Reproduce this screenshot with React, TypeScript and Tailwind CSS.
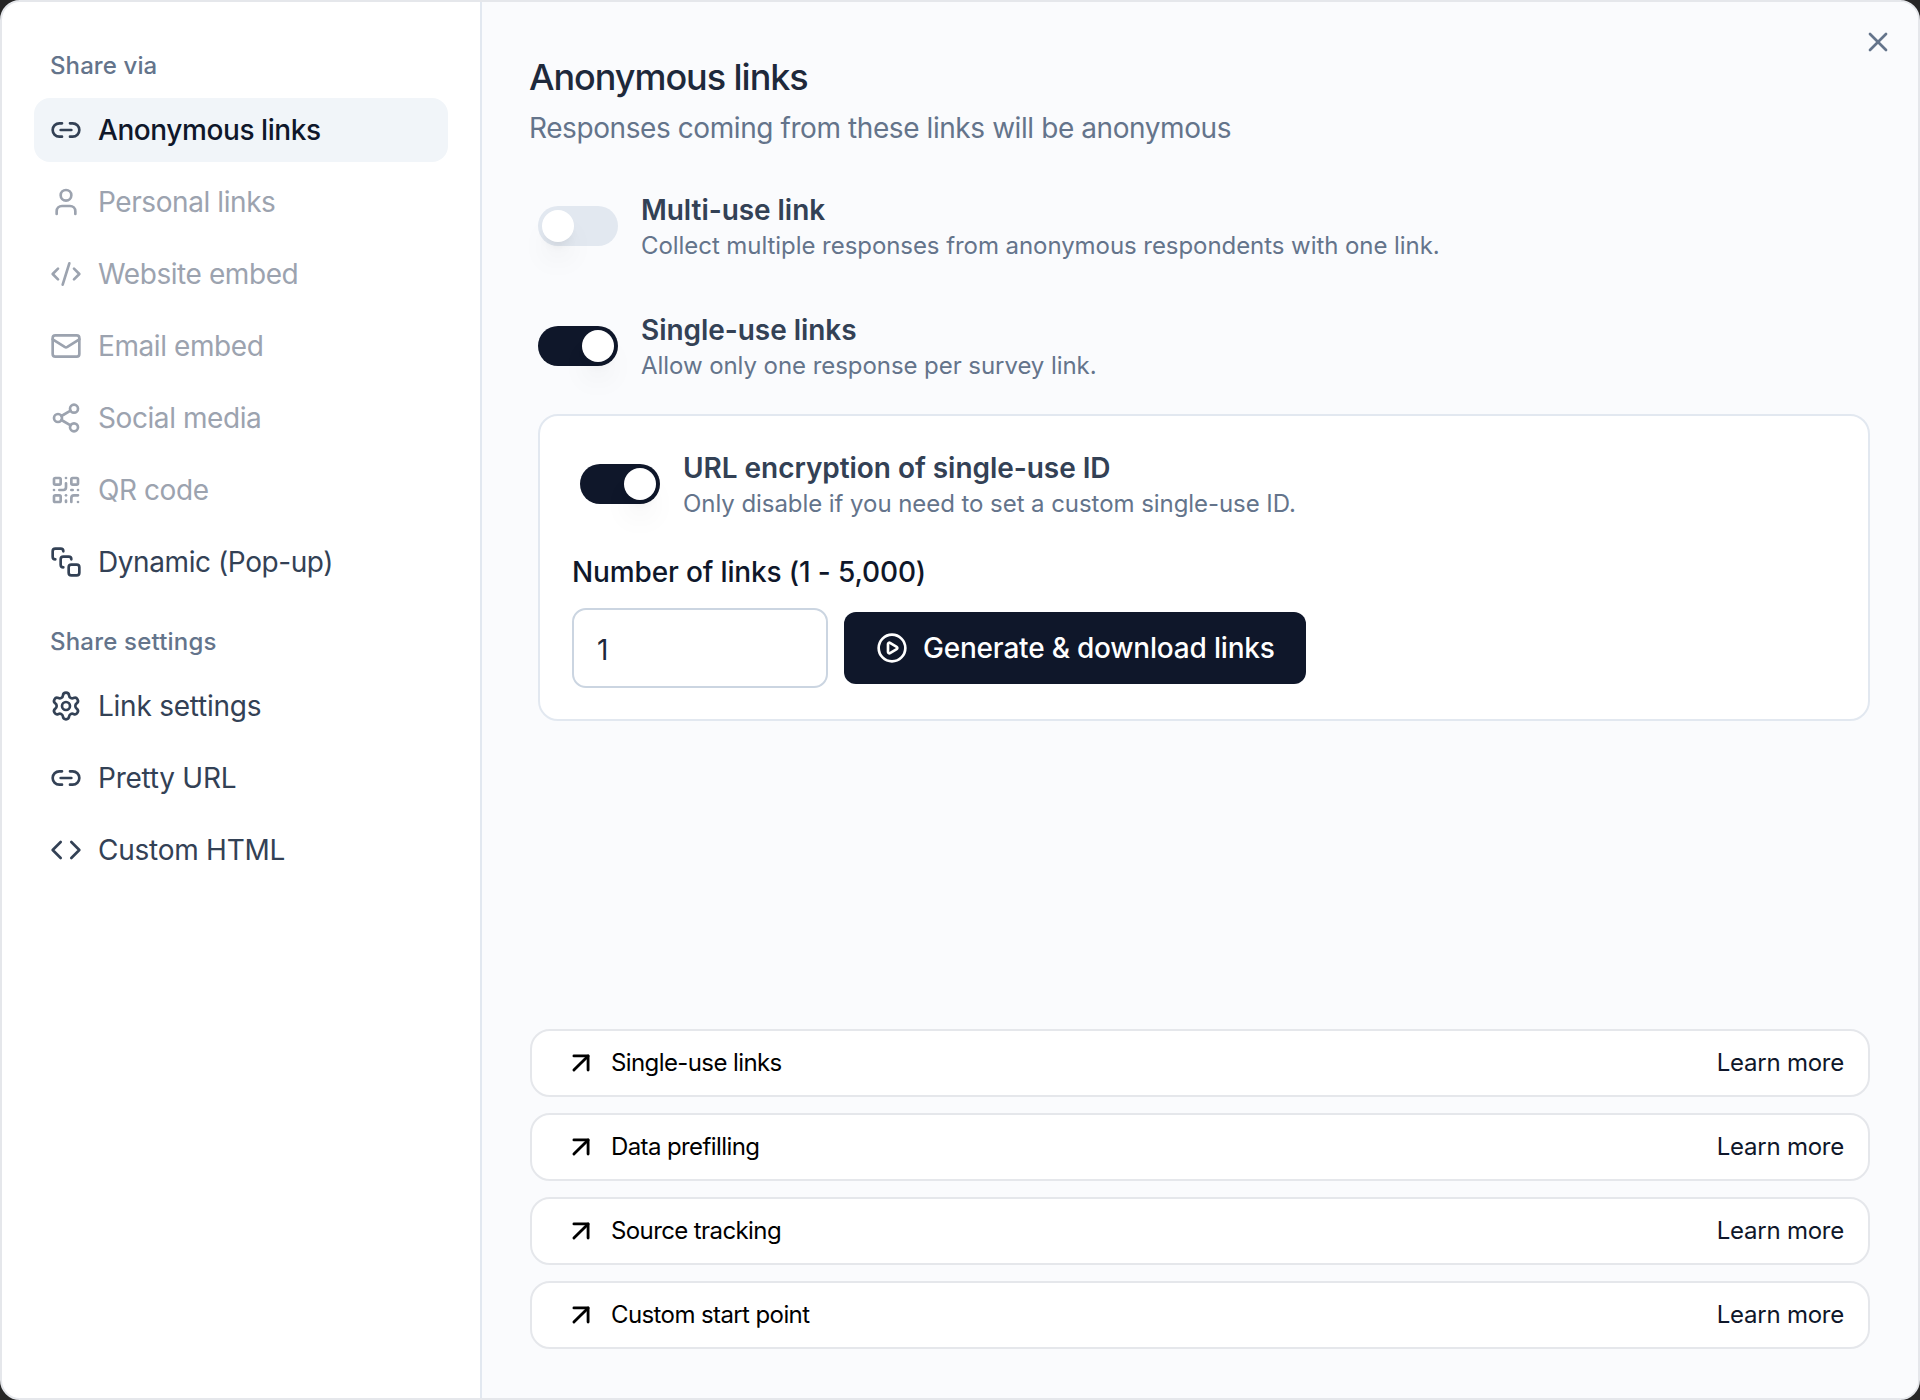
import {
  ArrowUpRight,
  CirclePlay,
  CodeXml,
  Code,
  Link2,
  Mail,
  QrCode,
  Settings,
  Share2,
  SquareStack,
  User,
  X,
} from "lucide-react"
import type { LucideIcon } from "lucide-react"

const shareItems: { label: string; icon: LucideIcon; state: "active" | "muted" | "normal" }[] = [
  { label: "Anonymous links", icon: Link2, state: "active" },
  { label: "Personal links", icon: User, state: "muted" },
  { label: "Website embed", icon: CodeXml, state: "muted" },
  { label: "Email embed", icon: Mail, state: "muted" },
  { label: "Social media", icon: Share2, state: "muted" },
  { label: "QR code", icon: QrCode, state: "muted" },
  { label: "Dynamic (Pop-up)", icon: SquareStack, state: "normal" },
]

const settingItems: { label: string; icon: LucideIcon }[] = [
  { label: "Link settings", icon: Settings },
  { label: "Pretty URL", icon: Link2 },
  { label: "Custom HTML", icon: Code },
]

const helpItems = ["Single-use links", "Data prefilling", "Source tracking", "Custom start point"]

function NavItem({
  label,
  icon: Icon,
  state,
  className = "tracking-[-0.42px]",
}: {
  label: string
  icon: LucideIcon
  state: "active" | "muted" | "normal"
  className?: string
}) {
  const tone =
    state === "active"
      ? "bg-[#f1f5f9] text-[#0f172a]"
      : state === "muted"
        ? "text-[#9ca3af]"
        : "text-[#334155]"
  return (
    <div className={`flex h-16 items-center gap-4 rounded-2xl pl-4 text-[28px] font-normal ${className} ${tone}`}>
      <Icon className={`size-8 shrink-0 ${state === "active" ? "text-[#334155]" : ""}`} />
      <span className={state === "active" ? "font-medium" : ""}>{label}</span>
    </div>
  )
}

function Toggle({ on }: { on: boolean }) {
  return (
    <div
      className={`-mt-[3px] flex h-10 w-20 shrink-0 items-center rounded-full px-1 ${
        on ? "justify-end bg-[#0f172a]" : "justify-start bg-[#e2e8f0]"
      }`}
    >
      <div className="size-8 rounded-full bg-white shadow-[0_20px_30px_-6px_rgba(0,0,0,0.1),0_8px_12px_-6px_rgba(0,0,0,0.1)]" />
    </div>
  )
}

function ToggleRow({ on, title, description }: { on: boolean; title: string; description: string }) {
  return (
    <div className="flex items-center gap-[23px]">
      <Toggle on={on} />
      <div>
        <p className="text-[28px] leading-9 font-semibold tracking-[-0.05px] text-[#334155]">{title}</p>
        <p className="mt-px text-2xl leading-[34px] tracking-[-0.06px] text-[#64748b]">{description}</p>
      </div>
    </div>
  )
}

export default function App() {
  return (
    <div className="h-[1400px] w-full bg-[#262626] font-['Inter',sans-serif]">
      <div className="relative flex h-full overflow-hidden rounded-[20px] border-2 border-[#e5e7eb] bg-white">
        <aside className="flex w-[480px] shrink-0 flex-col border-r-2 border-[#e2e8f0] pt-[48px] pr-8 pl-8">
          <p className="mb-4 pl-4 text-2xl leading-8 font-medium tracking-[0.1px] text-[#64748b]">Share via</p>
          <div className="flex flex-col gap-2">
            {shareItems.map((item) => (
              <NavItem key={item.label} {...item} />
            ))}
          </div>
          <p className="mt-8 mb-4 pl-4 text-2xl leading-8 font-medium tracking-[0.2px] text-[#64748b]">Share settings</p>
          <div className="flex flex-col gap-2">
            {settingItems.map((item) => (
              <NavItem key={item.label} {...item} state="normal" className="tracking-[-0.25px]" />
            ))}
          </div>
        </aside>

        <main className="flex min-w-0 flex-1 flex-col bg-[#fafbfd] pt-[50px] pr-[48px] pb-[49px] pl-[48px]">
          <button type="button" className="absolute top-6 right-6 text-[#64748b]">
            <X className="size-8" />
          </button>
          <h1 className="-ml-px text-4xl leading-[50px] font-medium tracking-[-1.05px] text-[#1e293b]">Anonymous links</h1>
          <p className="-ml-px text-[28px] leading-[52px] tracking-[-0.42px] text-[#64748b]">
            Responses coming from these links will be anonymous
          </p>

          <div className="mt-[38px] flex flex-col gap-[49px] pl-2">
            <ToggleRow
              on={false}
              title="Multi-use link"
              description="Collect multiple responses from anonymous respondents with one link."
            />
            <div className="flex flex-col gap-[31px]">
              <ToggleRow on title="Single-use links" description="Allow only one response per survey link." />
              <div className="rounded-[20px] border-2 border-[#e2e8f0] bg-white pt-[34px] pr-8 pb-[31px] pl-8">
                <div className="pl-2">
                  <ToggleRow
                    on
                    title="URL encryption of single-use ID"
                    description="Only disable if you need to set a custom single-use ID."
                  />
                </div>
                <p className="mt-[31px] text-[28px] leading-10 font-medium tracking-[-0.14px] text-[#0f172a]">
                  Number of links (1 - 5,000)
                </p>
                <div className="mt-4 flex items-center gap-4">
                  <div className="flex h-20 w-[256px] items-center rounded-[14px] border-2 border-[#cbd5e1] bg-white pt-1 pl-[23px] text-[28px] text-[#1e293b]">
                    1
                  </div>
                  <button
                    type="button"
                    className="flex h-[72px] items-center gap-[15px] rounded-xl bg-[#0f172a] pr-[31px] pl-8 text-[28px] font-medium tracking-[-0.2px] text-white"
                  >
                    <CirclePlay className="size-8" />
                    Generate &amp; download links
                  </button>
                </div>
              </div>
            </div>
          </div>

          <div className="mt-auto flex flex-col gap-4">
            {helpItems.map((item) => (
              <div
                key={item}
                className="flex h-[68px] items-center justify-between rounded-[20px] border-2 border-[#e5e7eb] bg-white pr-6 pl-8 text-2xl"
              >
                <div className="flex items-center gap-[13px] tracking-[-0.6px] text-black">
                  <ArrowUpRight className="size-[34px]" />
                  {item}
                </div>
                <span className="tracking-[-0.24px] text-[#0f172a]">Learn more</span>
              </div>
            ))}
          </div>
        </main>
      </div>
    </div>
  )
}
